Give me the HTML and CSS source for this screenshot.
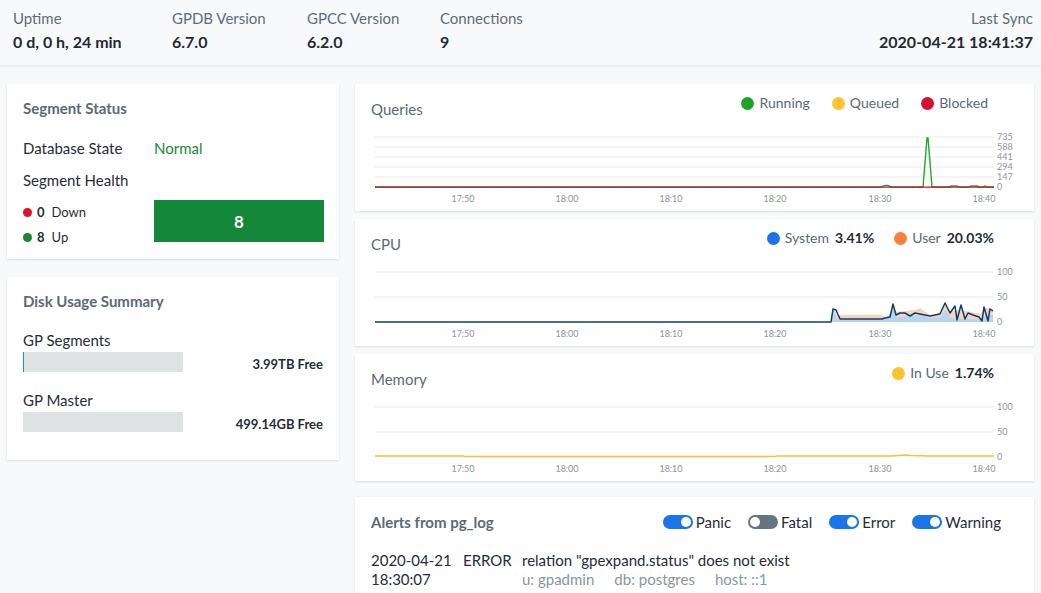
FILE: index.html
```html
<!DOCTYPE html>
<html>
<head>
<meta charset="utf-8">
<link rel="stylesheet" href="styles.css">
</head>
<body>
<header class="topbar">
  <div class="stat w159"><div class="stat-label">Uptime</div><div class="stat-value">0 d, 0 h, 24 min</div></div>
  <div class="stat w135"><div class="stat-label">GPDB Version</div><div class="stat-value">6.7.0</div></div>
  <div class="stat w133"><div class="stat-label">GPCC Version</div><div class="stat-value">6.2.0</div></div>
  <div class="stat"><div class="stat-label">Connections</div><div class="stat-value">9</div></div>
  <div class="stat stat-right"><div class="stat-label">Last Sync</div><div class="stat-value">2020-04-21 18:41:37</div></div>
</header>

<main class="layout">
  <div class="left-col">
    <section class="card seg-card">
      <h2 class="card-title">Segment Status</h2>
      <div class="kv first"><span class="kv-key">Database State</span><span class="kv-ok">Normal</span></div>
      <div class="kv"><span class="kv-key">Segment Health</span></div>
      <div class="health">
        <div class="health-legend">
          <div class="hl-row"><span class="dot dot-red"></span><b>0</b><span>Down</span></div>
          <div class="hl-row"><span class="dot dot-green"></span><b>8</b><span>Up</span></div>
        </div>
        <div class="health-box">8</div>
      </div>
    </section>

    <section class="card disk-card">
      <h2 class="card-title">Disk Usage Summary</h2>
      <div class="disk first">
        <div class="disk-label">GP Segments</div>
        <div class="disk-row"><div class="disk-bar"><div class="disk-fill" style="width:1px"></div></div><span class="disk-free">3.99TB Free</span></div>
      </div>
      <div class="disk">
        <div class="disk-label">GP Master</div>
        <div class="disk-row"><div class="disk-bar"></div><span class="disk-free">499.14GB Free</span></div>
      </div>
    </section>
  </div>

  <div class="right-col">
    <section class="card chart-card">
      <div class="chart-head">
        <h3 class="chart-title">Queries</h3>
        <div class="legend legend-q">
          <span class="lg"><span class="ldot" style="background:#1fa526"></span>Running</span>
          <span class="lg"><span class="ldot" style="background:#fec530"></span>Queued</span>
          <span class="lg"><span class="ldot" style="background:#d6102c"></span>Blocked</span>
        </div>
      </div>
      <svg class="chart" width="647" height="75" viewBox="0 0 647 75">
        <g stroke="#eeeff0" stroke-width="1.4">
          <line x1="4" y1="7" x2="623" y2="7"/><line x1="4" y1="17" x2="623" y2="17"/><line x1="4" y1="27" x2="623" y2="27"/><line x1="4" y1="37" x2="623" y2="37"/><line x1="4" y1="47" x2="623" y2="47"/>
        </g>
        <g class="ylab"><text x="626" y="10">735</text><text x="626" y="20">588</text><text x="626" y="30">441</text><text x="626" y="40">294</text><text x="626" y="50">147</text><text x="626" y="60">0</text></g>
        <polyline fill="none" stroke="#22a92a" stroke-width="1.4" points="4,57 510,57 514,55.5 517,55.5 520,57 552,57 556,8 557,8 561,57 578,57 580,56 586,56 588,57 598,57 600,56 606,56 608,57 612,57 614,56 616,57 623,57"/>
        <line x1="4" y1="57.2" x2="623" y2="57.2" stroke="#c40f2c" stroke-width="1.3"/>
        <g class="xlab"><text x="92" y="72">17:50</text><text x="196" y="72">18:00</text><text x="300" y="72">18:10</text><text x="404" y="72">18:20</text><text x="509" y="72">18:30</text><text x="613" y="72">18:40</text></g>
      </svg>
    </section>

    <section class="card chart-card">
      <div class="chart-head">
        <h3 class="chart-title">CPU</h3>
        <div class="legend">
          <span class="lg"><span class="ldot" style="background:#1a73e8"></span>System<b>3.41%</b></span>
          <span class="lg"><span class="ldot" style="background:#fb7e3c"></span>User<b>20.03%</b></span>
        </div>
      </div>
      <svg class="chart" width="647" height="75" viewBox="0 0 647 75">
        <g stroke="#eeeff0" stroke-width="1.4">
          <line x1="4" y1="7" x2="623" y2="7"/><line x1="4" y1="32" x2="623" y2="32"/>
        </g>
        <g class="ylab"><text x="626" y="10">100</text><text x="626" y="35">50</text><text x="626" y="60">0</text></g>
        <polygon fill="#fdd3b9" points="460,57 462,42 466,50 470,50 511,50 514,52 518,51 522,41 525,47 534,46 544,45 549,43 553,46 559,50 569,48 574,40 579,46 590,45 600,47 610,49 613,43 619,43 622,44 622,57"/>
        <polygon fill="#b6d4f6" points="460,57 462,46 467,55 511,55 516,53 522,44 525,52 540,51 549,50 560,53 570,52 574,45 580,53 595,54 610,54 616,50 622,50 622,57"/>
        <polyline fill="none" stroke="#0d3e6e" stroke-width="1.5" stroke-linejoin="round" points="4,57 460,57 462,44 465,45 469,54 511,54 514,53 519,52 522,39 525,50 529,48 534,48 539,51 544,48 549,49 559,51 569,49 574,38 579,48 584,41 586,55 590,40 594,54 597,48 602,50 608,52 611,56 613,42 617,56 619,44 622,46"/>
        <g class="xlab"><text x="92" y="72">17:50</text><text x="196" y="72">18:00</text><text x="300" y="72">18:10</text><text x="404" y="72">18:20</text><text x="509" y="72">18:30</text><text x="613" y="72">18:40</text></g>
      </svg>
    </section>

    <section class="card chart-card">
      <div class="chart-head">
        <h3 class="chart-title">Memory</h3>
        <div class="legend">
          <span class="lg"><span class="ldot" style="background:#fcc22d"></span>In Use<b>1.74%</b></span>
        </div>
      </div>
      <svg class="chart" width="647" height="75" viewBox="0 0 647 75">
        <g stroke="#eeeff0" stroke-width="1.4">
          <line x1="4" y1="7" x2="623" y2="7"/><line x1="4" y1="32" x2="623" y2="32"/>
        </g>
        <g class="ylab"><text x="626" y="10">100</text><text x="626" y="35">50</text><text x="626" y="60">0</text></g>
        <polyline fill="none" stroke="#fbc02d" stroke-width="1.5" points="4,56 92,56 94,56.6 404,56.6 406,56 520,56 528,55.5 534,55 540,55.5 560,56 623,56"/>
        <g class="xlab"><text x="92" y="72">17:50</text><text x="196" y="72">18:00</text><text x="300" y="72">18:10</text><text x="404" y="72">18:20</text><text x="509" y="72">18:30</text><text x="613" y="72">18:40</text></g>
      </svg>
    </section>

    <section class="card alerts-card">
      <div class="alerts-head">
        <h2 class="card-title">Alerts from pg_log</h2>
        <div class="toggles">
          <span class="tg"><span class="switch on"></span>Panic</span>
          <span class="tg"><span class="switch off"></span>Fatal</span>
          <span class="tg"><span class="switch on"></span>Error</span>
          <span class="tg"><span class="switch on"></span>Warning</span>
        </div>
      </div>
      <div class="alert-row">
        <div class="a-time">2020-04-21<br>18:30:07</div>
        <div class="a-level">ERROR</div>
        <div class="a-msg">
          <div>relation "gpexpand.status" does not exist</div>
          <div class="a-meta"><span>u: gpadmin</span><span>db: postgres</span><span>host: ::1</span></div>
        </div>
      </div>
    </section>
  </div>
</main>
</body>
</html>
```

FILE: styles.css
```css
* { box-sizing: border-box; }
html, body { margin: 0; padding: 0; }
body {
  background: #f8f9fb;
  font-family: "Source Sans Pro", Lato, "Noto Sans", sans-serif;
  color: #1f2d38;
  width: 1041px;
  height: 593px;
  overflow: hidden;
}
h2, h3 { margin: 0; }

.topbar {
  height: 67px;
  border-bottom: 2px solid #eceef1;
  display: flex;
  padding: 9px 8px 0 13px;
}
.stat-label { font-size: 15px; line-height: 18px; color: #5f6d77; }
.stat-value { font-size: 16px; line-height: 22px; font-weight: 700; margin-top: 4px; color: #1e2b35; }
.w159 { width: 159px; }
.w135 { width: 135px; }
.w133 { width: 133px; }
.stat-right { margin-left: auto; text-align: right; }

.layout {
  display: grid;
  grid-template-columns: 332px 679px;
  column-gap: 16px;
  padding: 17px 7px 0 7px;
}
.left-col { display: flex; flex-direction: column; gap: 18px; }
.right-col { display: flex; flex-direction: column; gap: 8px; }

.card {
  background: #fff;
  box-shadow: 0 1px 2px rgba(30, 40, 50, 0.13);
}
.card-title {
  font-size: 15px;
  line-height: 18px;
  font-weight: 700;
  color: #5b6a75;
}

.seg-card { height: 175px; padding: 15px 15px 0 16px; }
.kv { display: flex; font-size: 15px; line-height: 20px; margin-top: 12px; }
.kv.first { margin-top: 21px; }
.kv-key { width: 131px; color: #1f2d38; }
.kv-ok { color: #17873a; }
.health { display: flex; margin-top: 10px; height: 42px; }
.health-legend { width: 131px; padding-top: 2px; }
.hl-row { display: flex; align-items: center; font-size: 13px; line-height: 20px; height: 20px; margin-bottom: 5px; }
.hl-row b { margin-left: 5px; margin-right: 7px; font-weight: 700; }
.dot { width: 9px; height: 9px; border-radius: 50%; display: inline-block; }
.dot-red { background: #e0112c; }
.dot-green { background: #17873a; }
.health-box {
  flex: 1;
  background: #15873a;
  color: #fff;
  font-weight: 700;
  font-size: 17px;
  display: flex;
  align-items: center;
  justify-content: center;
}

.disk-card { height: 183px; padding: 15px 16px 0 16px; }
.disk { margin-top: 18px; }
.disk.first { margin-top: 20px; }
.disk-label { font-size: 15px; line-height: 20px; color: #1f2d38; }
.disk-row { display: flex; align-items: flex-end; justify-content: space-between; margin-top: 2px; }
.disk-bar { width: 160px; height: 20px; background: #dfe2e3; }
.disk-fill { height: 100%; background: #1aa38a; }
.disk-free { font-size: 13px; line-height: 16px; font-weight: 700; color: #1f2d38; margin-bottom: 0; }

.chart-card { height: 127px; padding: 16px 16px 0 16px; }
.chart-head { display: flex; justify-content: space-between; height: 30px; }
.chart-title { font-size: 15px; line-height: 18px; font-weight: 400; color: #5b6a75; }
.legend { display: flex; gap: 20px; margin-top: -6px; padding-right: 24px; height: 18px; }
.legend-q { gap: 22px; padding-right: 30px; }
.lg { display: flex; align-items: center; font-size: 14px; line-height: 18px; color: #5b6a75; white-space: nowrap; }
.lg b { color: #1f2d38; font-weight: 700; margin-left: 6px; }
.ldot { width: 13px; height: 13px; border-radius: 50%; margin-right: 5px; display: inline-block; }
.chart { display: block; }
.ylab text { font-size: 9px; fill: #8e959a; font-family: "Source Sans Pro", Lato, sans-serif; }
.xlab text { font-size: 9px; fill: #8e959a; text-anchor: middle; font-family: "Source Sans Pro", Lato, sans-serif; }

.alerts-card { margin-top: 8px; height: 110px; padding: 16px 33px 0 16px; }
.alerts-head { display: flex; justify-content: space-between; align-items: center; height: 18px; }
.toggles { display: flex; gap: 17px; }
.tg { display: flex; align-items: center; font-size: 15px; line-height: 18px; color: #1f2d38; }
.switch {
  width: 30px; height: 14px; border-radius: 7px; position: relative; margin-right: 3px; display: inline-block;
}
.switch::after {
  content: ""; position: absolute; top: 2px; width: 10px; height: 10px; border-radius: 50%;
  background: #fff;
}
.switch.on { background: #1b74e8; }
.switch.on::after { right: 2px; }
.switch.off { background: #66767f; }
.switch.off::after { left: 2px; }

.alert-row { display: flex; margin-top: 20px; font-size: 15px; line-height: 19px; color: #1f2d38; }
.a-time { width: 92px; }
.a-level { width: 59px; }
.a-meta { display: flex; gap: 20px; color: #8a969e; }
```
